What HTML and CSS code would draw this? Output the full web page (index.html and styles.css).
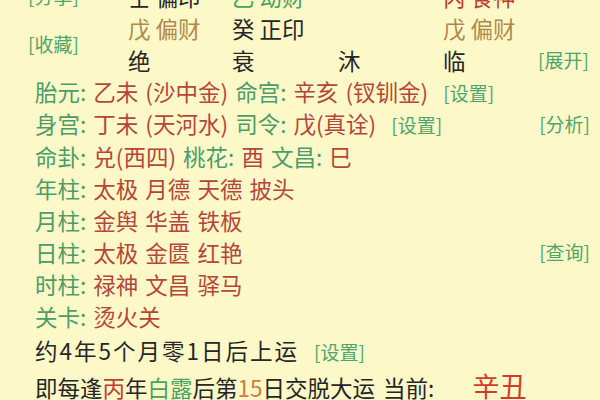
FILE: index.html
```html
<!DOCTYPE html>
<html lang="zh-CN">
<head>
    <meta charset="UTF-8">
    <title>排盘</title>
    <link rel="stylesheet" href="styles.css">
</head>
<body>

    <!-- 十神 / 长生 表格 -->
    <div class="pillars">
        <a href="#" class="link side">[分享]</a>
        <span class="dark">壬 偏印</span>
        <span class="green">乙 劫财</span>
        <span></span>
        <span class="red">丙 食神</span>
        <span></span>

        <a href="#" class="link side collect">[收藏]</a>
        <span class="olive">戊 偏财</span>
        <span class="dark">癸 正印</span>
        <span></span>
        <span class="olive">戊 偏财</span>
        <span></span>

        <span class="dark">绝</span>
        <span class="dark">衰</span>
        <span class="dark">沐</span>
        <span class="dark">临</span>
        <a href="#" class="link">[展开]</a>
    </div>

    <!-- 详细信息 -->
    <div class="info">
        <div class="row">
            <div><span class="label">胎元:</span> <span class="value">乙未 (沙中金)</span> <span class="label">命宫:</span> <span class="value">辛亥 (钗钏金)</span> <a href="#" class="link">[设置]</a></div>
        </div>
        <div class="row">
            <div><span class="label">身宫:</span> <span class="value">丁未 (天河水)</span> <span class="label">司令:</span> <span class="value">戊(真诠)</span> <a href="#" class="link">[设置]</a></div>
            <a href="#" class="link">[分析]</a>
        </div>
        <div class="row">
            <div><span class="label">命卦:</span> <span class="value">兑(西四)</span> <span class="label">桃花:</span> <span class="value">酉</span> <span class="label">文昌:</span> <span class="value">巳</span></div>
        </div>
        <div class="row">
            <div><span class="label">年柱:</span> <span class="value">太极 月德 天德 披头</span></div>
        </div>
        <div class="row">
            <div><span class="label">月柱:</span> <span class="value">金舆 华盖 铁板</span></div>
        </div>
        <div class="row">
            <div><span class="label">日柱:</span> <span class="value">太极 金匮 红艳</span></div>
            <a href="#" class="link">[查询]</a>
        </div>
        <div class="row">
            <div><span class="label">时柱:</span> <span class="value">禄神 文昌 驿马</span></div>
        </div>
        <div class="row">
            <div><span class="label">关卡:</span> <span class="value">烫火关</span></div>
        </div>
        <div class="row luck">
            <div class="dark"><span class="start">约4年5个月零1日后上运</span> <a href="#" class="link">[设置]</a></div>
        </div>
        <div class="row luck">
            <div class="dark plain">即每逢<span class="red">丙</span>年<span class="green">白露</span>后第<span class="orange">15</span>日交脱大运 当前: <span class="current">辛丑</span></div>
        </div>
    </div>

</body>
</html>
```

FILE: styles.css
```css
body {
    margin: 0;
    padding: 0;
    width: 600px;
    height: 400px;
    overflow: hidden;
    background-color: #fcf8c7; /* pale yellow paper */
    font-family: "Noto Sans CJK SC", "Noto Sans", sans-serif;
    font-size: 22.5px;
    color: #262626;
}

a {
    text-decoration: none;
}

/* Top table: 4 pillars */
.pillars {
    display: grid;
    grid-template-columns: 100px 104px 106px 105px 95px 1fr;
    grid-auto-rows: 32px;
    align-items: center;
    margin-top: -20px;
    padding-left: 28px;
    line-height: 32px;
}

.pillars .side {
    grid-column: 1;
}

.pillars .collect {
    grid-row: 2 / span 2;
    align-self: center;
}

.link {
    font-size: 19px;
    color: #4ea56c; /* green action link */
    word-spacing: 0;
    letter-spacing: 0;
}

.dark {
    color: #262626;
}

.green {
    color: #47a263;
}

.red {
    color: #bf3d2e;
}

.olive {
    color: #b08a4c;
}

.orange {
    color: #d5793b;
}

/* Info rows */
.info {
    padding: 0 10px 0 35px;
}

.row {
    display: flex;
    justify-content: space-between;
    align-items: center;
    height: 32px;
    line-height: 32px;
    white-space: nowrap;
    word-spacing: 2px;
}

.row .link {
    margin-left: 8px;
}

.label {
    color: #4c9c6a;
}

.value {
    color: #b5463a;
}

.luck {
    margin-top: 3px;
}

.start {
    letter-spacing: 2px;
}

.plain {
    word-spacing: 3px;
}

.current {
    margin-left: 30px;
    font-size: 27px;
    color: #d33a2b;
}
```
